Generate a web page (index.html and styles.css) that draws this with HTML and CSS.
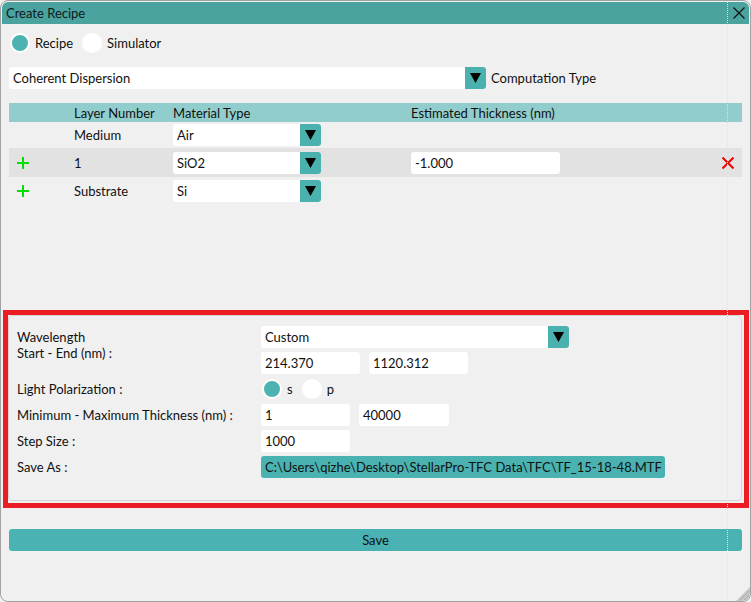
FILE: index.html
```html
<!DOCTYPE html>
<html>
<head>
<meta charset="utf-8">
<link rel="stylesheet" href="styles.css">
</head>
<body>
<div class="window">
  <div class="titlebar">
    <span class="title">Create Recipe</span>
    <span class="close"><svg width="12" height="12" viewBox="0 0 12 12"><path d="M0.5 0.5L11.5 11.5M11.5 0.5L0.5 11.5" stroke="#111" stroke-width="1.2" fill="none"/></svg></span>
  </div>
  <div class="top">
    <div class="radios">
      <span class="radio"><span class="dot checked"></span>Recipe</span>
      <span class="radio"><span class="dot"></span>Simulator</span>
    </div>
    <div class="comp-row">
      <div class="combo wide"><span class="val">Coherent Dispersion</span><span class="btn"><svg width="11" height="10" viewBox="0 0 11 10"><path d="M0 0H11L5.5 10Z" fill="#000"/></svg></span></div>
      <span class="comp-label">Computation Type</span>
    </div>
    <div class="table">
      <div class="trow thead">
        <span></span><span>Layer Number</span><span>Material Type</span><span>Estimated Thickness (nm)</span><span></span>
      </div>
      <div class="trow r-medium">
        <span></span><span>Medium</span>
        <div class="combo"><span class="val">Air</span><span class="btn"><svg width="11" height="10" viewBox="0 0 11 10"><path d="M0 0H11L5.5 10Z" fill="#000"/></svg></span></div>
        <span></span><span></span>
      </div>
      <div class="trow r-layer">
        <span class="plus"><svg width="12" height="12" viewBox="0 0 12 12"><path d="M6 0V12M0 6H12" stroke="#00e000" stroke-width="2"/></svg></span>
        <span>1</span>
        <div class="combo"><span class="val">SiO2</span><span class="btn"><svg width="11" height="10" viewBox="0 0 11 10"><path d="M0 0H11L5.5 10Z" fill="#000"/></svg></span></div>
        <div class="field thick">-1.000</div>
        <span class="del"><svg width="12" height="12" viewBox="0 0 12 12"><path d="M0.5 0.5L11.5 11.5M11.5 0.5L0.5 11.5" stroke="#f00000" stroke-width="2"/></svg></span>
      </div>
      <div class="trow r-sub">
        <span class="plus"><svg width="12" height="12" viewBox="0 0 12 12"><path d="M6 0V12M0 6H12" stroke="#00e000" stroke-width="2"/></svg></span>
        <span>Substrate</span>
        <div class="combo"><span class="val">Si</span><span class="btn"><svg width="11" height="10" viewBox="0 0 11 10"><path d="M0 0H11L5.5 10Z" fill="#000"/></svg></span></div>
        <span></span><span></span>
      </div>
    </div>
  </div>
  <div class="highlight">
    <div class="group">
      <div class="grow g-wave">
        <div class="lbl two">Wavelength<br>Start - End (nm) :</div>
        <div class="ctrls">
          <div class="combo long"><span class="val">Custom</span><span class="btn"><svg width="11" height="10" viewBox="0 0 11 10"><path d="M0 0H11L5.5 10Z" fill="#000"/></svg></span></div>
          <div class="pair">
            <div class="field w99">214.370</div>
            <div class="field w99">1120.312</div>
          </div>
        </div>
      </div>
      <div class="grow">
        <div class="lbl">Light Polarization :</div>
        <div class="pol">
          <span class="radio"><span class="dot checked"></span>s</span>
          <span class="radio"><span class="dot"></span>p</span>
        </div>
      </div>
      <div class="grow">
        <div class="lbl">Minimum - Maximum Thickness (nm) :</div>
        <div class="pair">
          <div class="field w89">1</div>
          <div class="field w90">40000</div>
        </div>
      </div>
      <div class="grow">
        <div class="lbl">Step Size :</div>
        <div class="field w89">1000</div>
      </div>
      <div class="grow">
        <div class="lbl">Save As :</div>
        <div class="path">C:\Users\qizhe\Desktop\StellarPro-TFC Data\TFC\TF_15-18-48.MTF</div>
      </div>
    </div>
  </div>
  <div class="footer">
    <div class="save">Save</div>
  </div>
  <div class="focusline"></div>
  <svg class="grip" width="14" height="14" viewBox="0 0 14 14"><path d="M14 0L0 14H14Z" fill="#c8c8c8"/><path d="M13 4L4 13M13 8L8 13" stroke="#a8a8a8" stroke-width="1"/></svg>
</div>
</body>
</html>
```
FILE: styles.css
```css
* { box-sizing: border-box; }
html, body { margin: 0; padding: 0; }
body {
  background: #f0f0f0;
  font-family: Lato, "Noto Sans", sans-serif;
  font-size: 13px;
  color: #111;
  width: 751px;
  height: 602px;
  overflow: hidden;
}
.window {
  position: relative;
  width: 751px;
  height: 602px;
  border: 1px solid #a2a2a2;
  border-radius: 8px;
  background: #f0f0f0;
  padding-top: 1px;
  overflow: hidden;
}
.titlebar {
  height: 22px;
  margin: 0 1px 0 1px;
  background: #4aa39f;
  border-radius: 6px 6px 0 0;
  display: flex;
  align-items: center;
  justify-content: space-between;
}
.title { padding-left: 4px; color: #0d1a1a; }
.close {
  width: 22px;
  height: 22px;
  display: flex;
  align-items: center;
  justify-content: center;
  border-left: 1px dotted #6e8e8c;
}
.top { padding: 0 8px; }
.radios {
  margin-top: 9px;
  height: 20px;
  display: flex;
  align-items: center;
  gap: 9px;
  padding-left: 1px;
}
.radio { display: flex; align-items: center; gap: 5px; }
.dot {
  width: 20px;
  height: 20px;
  border-radius: 50%;
  background: #fff;
  display: inline-block;
}
.dot.checked { background: #4cb3b1; border: 2px solid #fff; }
.comp-row {
  margin-top: 14px;
  height: 22px;
  display: flex;
  align-items: center;
  gap: 5px;
}
.combo {
  width: 148px;
  height: 22px;
  background: #fff;
  border-radius: 3px;
  display: flex;
  align-items: center;
  justify-content: space-between;
}
.combo.wide { width: 477px; }
.combo.long { width: 308px; }
.combo .val { padding-left: 4px; }
.combo .btn {
  width: 21px;
  height: 22px;
  background: #4ab1ae;
  border-radius: 0 3px 3px 0;
  display: flex;
  align-items: center;
  justify-content: center;
}
.table { margin-top: 14px; height: 207px; }
.trow {
  display: grid;
  grid-template-columns: 65px 99px 238px 1fr 28px;
  align-items: center;
  width: 733px;
}
.thead { height: 19px; background: #90cdcc; }
.r-medium { margin-top: 2px; height: 22px; }
.r-layer { margin-top: 2px; height: 29px; background: #e2e2e2; }
.r-sub { margin-top: 2px; height: 24px; }
.plus { padding-left: 8px; display: flex; align-items: center; }
.del { display: flex; justify-content: center; align-items: center; }
.field {
  height: 22px;
  background: #fff;
  border-radius: 3px;
  padding-left: 4px;
  display: flex;
  align-items: center;
}
.field.thick { width: 149px; }
.w99 { width: 99px; }
.w89 { width: 89px; }
.w90 { width: 90px; }
.highlight {
  margin: 0 1px 0 2px;
  height: 198px;
  border: 5px solid #ec1c24;
}
.group {
  height: 186px;
  margin-right: 2px;
  border: 1px solid #d4d4d4;
  border-radius: 4px;
  padding: 10px 0 0 8px;
  display: flex;
  flex-direction: column;
  gap: 4px;
}
.grow {
  display: grid;
  grid-template-columns: 244px 1fr;
  align-items: center;
  min-height: 22px;
}
.g-wave { align-items: start; }
.lbl.two { line-height: 16px; padding-top: 3px; }
.ctrls { display: flex; flex-direction: column; gap: 4px; }
.pair { display: flex; gap: 9px; }
.pol { display: flex; align-items: center; gap: 9px; padding-left: 1px; }
.path {
  width: 404px;
  height: 22px;
  background: #4ab2b0;
  border-radius: 3px;
  padding-left: 4px;
  display: flex;
  align-items: center;
}
.footer { padding: 0 8px; margin-top: 21px; }
.save {
  height: 22px;
  width: 733px;
  background: #4ab2b2;
  border-radius: 3px;
  display: flex;
  align-items: center;
  justify-content: center;
}
.focusline {
  position: absolute;
  left: 726px;
  top: 0;
  bottom: 0;
  border-left: 1px dotted #e2e2e2;
}
.grip { position: absolute; right: 0; bottom: 0; }
```
